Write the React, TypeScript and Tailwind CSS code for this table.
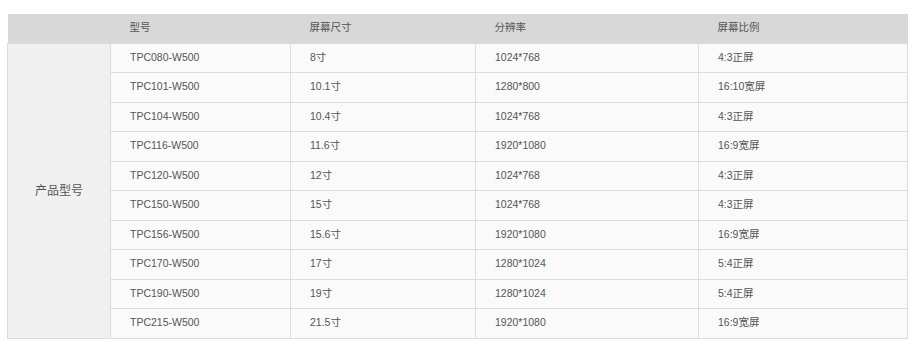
const rows = [
  ['TPC080-W500', '8寸', '1024*768', '4:3正屏'],
  ['TPC101-W500', '10.1寸', '1280*800', '16:10宽屏'],
  ['TPC104-W500', '10.4寸', '1024*768', '4:3正屏'],
  ['TPC116-W500', '11.6寸', '1920*1080', '16:9宽屏'],
  ['TPC120-W500', '12寸', '1024*768', '4:3正屏'],
  ['TPC150-W500', '15寸', '1024*768', '4:3正屏'],
  ['TPC156-W500', '15.6寸', '1920*1080', '16:9宽屏'],
  ['TPC170-W500', '17寸', '1280*1024', '5:4正屏'],
  ['TPC190-W500', '19寸', '1280*1024', '5:4正屏'],
  ['TPC215-W500', '21.5寸', '1920*1080', '16:9宽屏'],
];

const App = () => {
  return (
    <div className="w-[922px] h-[348px] bg-white pt-[14px] pl-[7px]">
      <table
        className="table-fixed border-collapse w-[900px] text-[10.5px] text-[#555]"
        style={{ fontFamily: '"Liberation Sans", Arial, "Noto Sans CJK SC", sans-serif' }}
      >
        <colgroup>
          <col className="w-[103px]" />
          <col className="w-[180px]" />
          <col className="w-[185px]" />
          <col className="w-[223px]" />
          <col className="w-[209px]" />
        </colgroup>
        <thead>
          <tr className="h-[29px] bg-[#d8d8d8] text-left">
            <th className="font-normal p-0"></th>
            <th className="font-normal pl-[19px] p-0">型号</th>
            <th className="font-normal pl-[19px] p-0">屏幕尺寸</th>
            <th className="font-normal pl-[19px] p-0">分辨率</th>
            <th className="font-normal pl-[19px] p-0">屏幕比例</th>
          </tr>
        </thead>
        <tbody>
          {rows.map((r, i) => (
            <tr key={r[0]} className="h-[29.5px]">
              {i === 0 && (
                <td rowSpan={rows.length} className="border border-[#dcdcdc] bg-[#f0f0f0] text-center text-[12px] p-0">
                  产品型号
                </td>
              )}
              {r.map((c, j) => (
                <td key={j} className="border border-[#dcdcdc] bg-[#fafafa] pl-[19px] p-0">
                  {c}
                </td>
              ))}
            </tr>
          ))}
        </tbody>
      </table>
    </div>
  );
};

export default App;
